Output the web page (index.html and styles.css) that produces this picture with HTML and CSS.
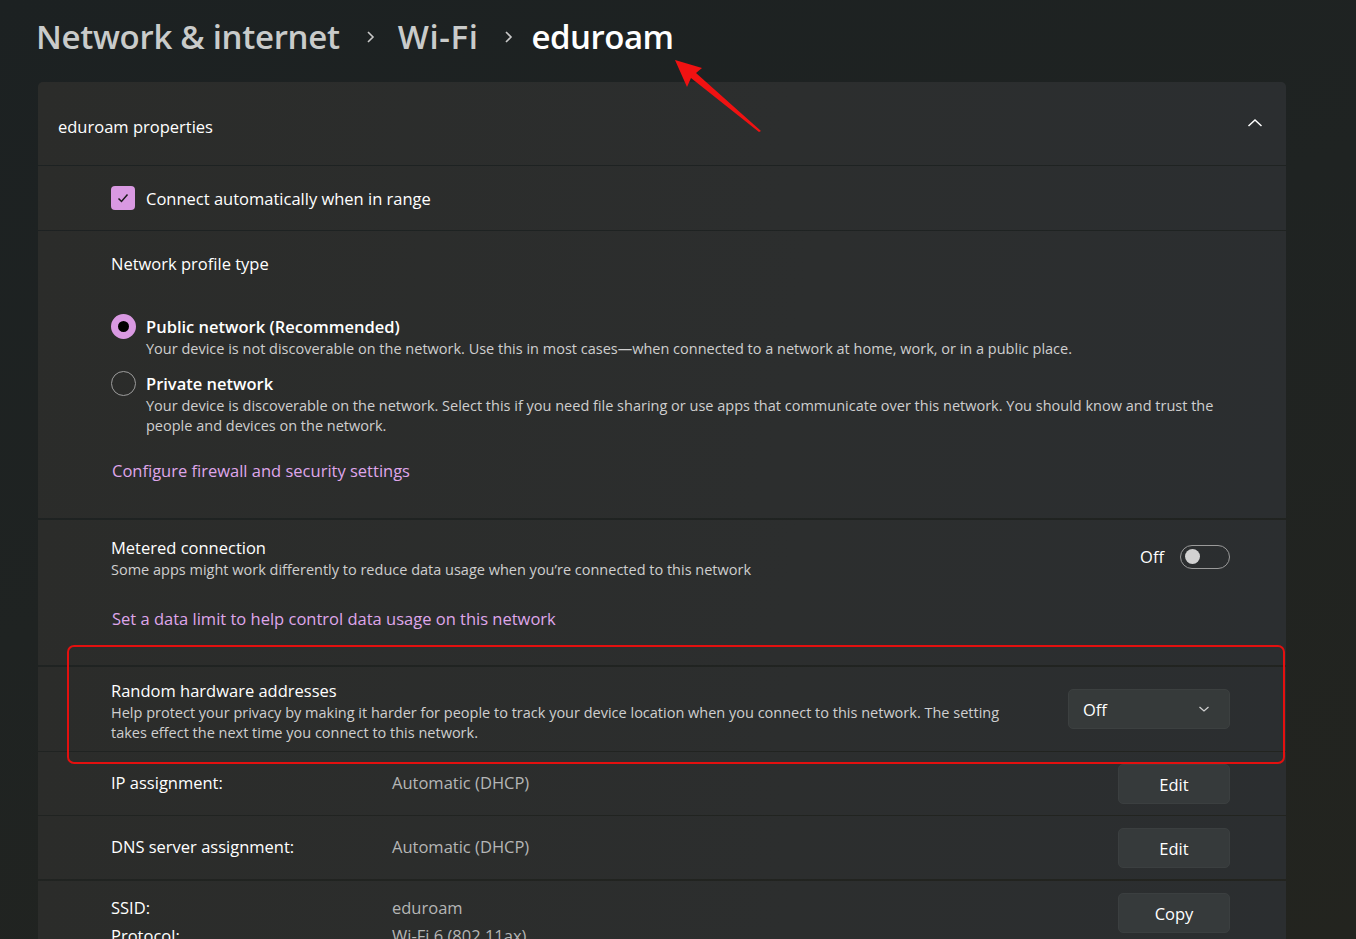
FILE: index.html
```html
<!DOCTYPE html>
<html lang="en">
<head>
<meta charset="utf-8">
<title>eduroam - Wi-Fi</title>
<link rel="stylesheet" href="styles.css">
</head>
<body>
<div class="page">
  <header class="crumbs">
    <span class="crumb">Network &amp; internet</span>
    <svg class="crumb-sep" width="12" height="14" viewBox="0 0 12 14"><path d="M3 2 L8 7 L3 12" fill="none" stroke="#c8c8c8" stroke-width="1.6"/></svg>
    <span class="crumb wifi">Wi-Fi</span>
    <svg class="crumb-sep last" width="12" height="14" viewBox="0 0 12 14"><path d="M3 2 L8 7 L3 12" fill="none" stroke="#c8c8c8" stroke-width="1.6"/></svg>
    <span class="crumb current">eduroam</span>
  </header>

  <main class="card">
    <div class="sec head">
      <span class="head-title">eduroam properties</span>
      <svg class="head-chev" width="16" height="10" viewBox="0 0 16 10"><path d="M1.5 8 L8 2 L14.5 8" fill="none" stroke="#ffffff" stroke-width="1.5"/></svg>
    </div>

    <div class="sec sep1 check-row">
      <span class="checkbox">
        <svg width="14" height="14" viewBox="0 0 14 14"><path d="M2.5 7.5 L5.5 10.5 L11.5 3.5" fill="none" stroke="#1b1b1b" stroke-width="1.5"/></svg>
      </span>
      <span class="text">Connect automatically when in range</span>
    </div>

    <div class="sec sep1 profile">
      <div class="text section-label">Network profile type</div>
      <div class="radio-item first">
        <span class="radio on"></span>
        <div class="radio-text">
          <div class="radio-title">Public network (Recommended)</div>
          <div class="desc">Your device is not discoverable on the network. Use this in most cases—when connected to a network at home, work, or in a public place.</div>
        </div>
      </div>
      <div class="radio-item">
        <span class="radio"></span>
        <div class="radio-text">
          <div class="radio-title">Private network</div>
          <div class="desc">Your device is discoverable on the network. Select this if you need file sharing or use apps that communicate over this network. You should know and trust the people and devices on the network.</div>
        </div>
      </div>
      <a class="link firewall" href="#">Configure firewall and security settings</a>
    </div>

    <div class="sec sep2 metered">
      <div class="metered-top">
        <div class="metered-text">
          <div class="text">Metered connection</div>
          <div class="desc">Some apps might work differently to reduce data usage when you’re connected to this network</div>
        </div>
        <div class="toggle-wrap">
          <span class="text">Off</span>
          <span class="toggle"><span class="knob"></span></span>
        </div>
      </div>
      <a class="link datalimit" href="#">Set a data limit to help control data usage on this network</a>
    </div>

    <div class="sec sep2 random">
      <div class="random-text">
        <div class="text">Random hardware addresses</div>
        <div class="desc">Help protect your privacy by making it harder for people to track your device location when you connect to this network. The setting takes effect the next time you connect to this network.</div>
      </div>
      <div class="dropdown">
        <span class="text">Off</span>
        <svg width="12" height="8" viewBox="0 0 12 8"><path d="M1.5 2 L6 6 L10.5 2" fill="none" stroke="#d0d0d0" stroke-width="1.3"/></svg>
      </div>
    </div>

    <div class="sec sep1 kv-row ip">
      <span class="kv-key">IP assignment:</span>
      <span class="kv-val">Automatic (DHCP)</span>
      <button class="btn">Edit</button>
    </div>

    <div class="sec sep1 kv-row dns">
      <span class="kv-key">DNS server assignment:</span>
      <span class="kv-val">Automatic (DHCP)</span>
      <button class="btn">Edit</button>
    </div>

    <div class="sec sep2 props">
      <div class="prop-list">
        <div class="prop"><span class="kv-key">SSID:</span><span class="kv-val">eduroam</span></div>
        <div class="prop"><span class="kv-key">Protocol:</span><span class="kv-val">Wi-Fi 6 (802.11ax)</span></div>
      </div>
      <button class="btn">Copy</button>
    </div>

    <div class="highlight"></div>
  </main>

  <svg class="arrow" width="100" height="80" viewBox="0 0 100 80">
    <polygon points="0,0 27,8 21,13 86,71 84,72 16,18 12,27" fill="#f01212"/>
  </svg>
</div>
</body>
</html>
```

FILE: styles.css
```css
* { box-sizing: border-box; }

html, body {
  margin: 0;
  height: 100%;
}

body {
  background: linear-gradient(160deg, #1c2122 0%, #1f2322 45%, #23241f 100%);
  color: #ffffff;
  font-family: "Segoe UI", "Open Sans", "Noto Sans", sans-serif;
  overflow: hidden;
}

.page {
  position: relative;
  width: 1356px;
  height: 939px;
}

.crumbs {
  height: 72px;
  display: flex;
  align-items: center;
  padding-left: 36px;
  margin-bottom: 10px;
}

.crumb {
  font-size: 33px;
  font-weight: 600;
  color: #c9cbca;
  letter-spacing: -0.3px;
}

.crumb.wifi { letter-spacing: 0.6px; }

.crumb.current { color: #ffffff; letter-spacing: -0.5px; }

.crumb-sep {
  margin: 2px 21px 0 25px;
}

.crumb-sep.last {
  margin: 2px 17px 0 24px;
}

.card {
  position: relative;
  margin-left: 38px;
  width: 1248px;
  display: flex;
  flex-direction: column;
}

.sec {
  background: linear-gradient(100deg, #2b2c2a 0%, #2c2e2e 60%, #2b2e30 100%);
  padding-left: 73px;
  padding-right: 56px;
}

.sep1 { margin-top: 1px; }
.sep2 { margin-top: 2px; }

.text {
  font-size: 16.5px;
  color: #ffffff;
}

.desc {
  font-size: 14.5px;
  color: #cfcfcf;
  line-height: 20px;
}

.head {
  height: 83px;
  border-radius: 5px 5px 0 0;
  padding-left: 20px;
  padding-right: 23px;
  padding-top: 5px;
  display: flex;
  align-items: center;
  justify-content: space-between;
}

.head-chev { margin-top: -6px; }

.head-title { font-size: 16.5px; }

.check-row {
  height: 64px;
  display: flex;
  align-items: center;
  gap: 11px;
}

.checkbox {
  width: 24px;
  height: 24px;
  border-radius: 4px;
  background: #d999e2;
  display: flex;
  align-items: center;
  justify-content: center;
}

.profile {
  height: 287px;
  padding-top: 21px;
}

.section-label { line-height: 24px; }

.radio-item {
  display: flex;
  gap: 10px;
  margin-top: 12px;
}

.radio-item.first { margin-top: 38px; }

.radio {
  flex: none;
  width: 25px;
  height: 25px;
  border-radius: 50%;
  border: 1.5px solid #9c9c9c;
}

.radio.on {
  border: 7px solid #d999e2;
  background: #000;
}

.radio-title {
  font-size: 16.5px;
  font-weight: 600;
  line-height: 24px;
  margin-top: 1px;
}

.link {
  display: inline-block;
  font-size: 16.5px;
  color: #dfa6ea;
  text-decoration: none;
}

.firewall { margin-top: 23px; line-height: 24px; margin-left: 1px; }

.metered {
  height: 145px;
  padding-top: 16px;
}

.metered-top {
  display: flex;
  justify-content: space-between;
  align-items: center;
}

.metered-text .text { line-height: 24px; }

.toggle-wrap {
  display: flex;
  align-items: center;
  gap: 16px;
  margin-top: -3px;
}

.toggle {
  width: 50px;
  height: 24px;
  border-radius: 12px;
  border: 1px solid #9a9a9a;
  display: flex;
  align-items: center;
  padding-left: 4px;
}

.knob {
  width: 15px;
  height: 15px;
  border-radius: 50%;
  background: #d2d2d2;
}

.datalimit { margin-top: 27px; line-height: 24px; margin-left: 1px; }

.random {
  height: 84px;
  display: flex;
  align-items: center;
  justify-content: space-between;
  padding-top: 4px;
}

.random-text { width: 910px; }
.random-text .text { line-height: 24px; }

.dropdown {
  width: 162px;
  height: 40px;
  border-radius: 5px;
  background: #363a3a;
  border: 1px solid #3c4040;
  display: flex;
  align-items: center;
  justify-content: space-between;
  padding: 0 19px 0 14px;
  margin-top: -4px;
}

.kv-row {
  height: 63px;
  display: flex;
  align-items: center;
}

.kv-key {
  width: 281px;
  font-size: 16.5px;
  color: #ffffff;
}

.kv-val {
  flex: 1;
  font-size: 16.5px;
  color: #b5b6b6;
}

.ip { align-items: flex-start; padding-top: 19px; }
.ip .btn { margin-top: -7px; }
.dns { align-items: flex-start; padding-top: 19px; }
.dns .btn { margin-top: -7px; }

.btn {
  width: 112px;
  height: 40px;
  border-radius: 5px;
  background: #363a3b;
  border: 1px solid #3b3f40;
  color: #ffffff;
  font-family: inherit;
  font-size: 16.5px;
}

.props {
  height: 70px;
  display: flex;
  align-items: flex-start;
  padding-top: 11px;
}

.props .btn { margin-top: 1px; }

.prop-list {
  flex: 1;
  padding-top: 2px;
}

.prop {
  display: flex;
  line-height: 28px;
}

.highlight {
  position: absolute;
  left: 29px;
  top: 563px;
  width: 1218px;
  height: 119px;
  border: 2px solid #e3100f;
  border-radius: 7px;
  pointer-events: none;
}

.arrow {
  position: absolute;
  left: 675px;
  top: 60px;
}
```
